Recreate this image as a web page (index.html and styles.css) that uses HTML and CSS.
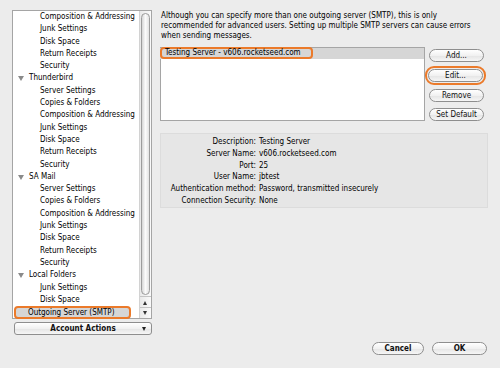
FILE: index.html
```html
<!DOCTYPE html>
<html lang="en">

<head>
    <meta charset="UTF-8">
    <title>Account Settings</title>
    <link rel="stylesheet" href="styles.css">
</head>

<body>
    <section class="window">
        <div class="sidebar">
            <div class="tree">
                <ul class="treelist">
                    <li class="child">Composition &amp; Addressing</li>
                    <li class="child">Junk Settings</li>
                    <li class="child">Disk Space</li>
                    <li class="child">Return Receipts</li>
                    <li class="child">Security</li>
                    <li class="parent">Thunderbird</li>
                    <li class="child">Server Settings</li>
                    <li class="child">Copies &amp; Folders</li>
                    <li class="child">Composition &amp; Addressing</li>
                    <li class="child">Junk Settings</li>
                    <li class="child">Disk Space</li>
                    <li class="child">Return Receipts</li>
                    <li class="child">Security</li>
                    <li class="parent">SA Mail</li>
                    <li class="child">Server Settings</li>
                    <li class="child">Copies &amp; Folders</li>
                    <li class="child">Composition &amp; Addressing</li>
                    <li class="child">Junk Settings</li>
                    <li class="child">Disk Space</li>
                    <li class="child">Return Receipts</li>
                    <li class="child">Security</li>
                    <li class="parent">Local Folders</li>
                    <li class="child">Junk Settings</li>
                    <li class="child">Disk Space</li>
                    <li class="top selected"><span class="ring">Outgoing Server (SMTP)</span></li>
                </ul>
                <div class="scrollbar">
                    <div class="thumb"></div>
                    <div class="arrow up"></div>
                    <div class="arrow down"></div>
                </div>
            </div>
            <button class="pill actions">Account Actions<span class="caret"></span></button>
        </div>

        <div class="main">
            <p class="intro">Although you can specify more than one outgoing server (SMTP), this is only recommended for advanced users. Setting up multiple SMTP servers can cause errors when sending messages.</p>

            <div class="servers">
                <div class="serverlist">
                    <div class="serverrow"><span class="ring">Testing Server - v606.rocketseed.com</span></div>
                </div>
                <div class="serverbuttons">
                    <button class="pill">Add...</button>
                    <div class="focus"><button class="pill">Edit...</button></div>
                    <button class="pill">Remove</button>
                    <button class="pill">Set Default</button>
                </div>
            </div>

            <div class="details">
                <span class="label">Description:</span><span>Testing Server</span>
                <span class="label">Server Name:</span><span>v606.rocketseed.com</span>
                <span class="label">Port:</span><span>25</span>
                <span class="label">User Name:</span><span>jbtest</span>
                <span class="label">Authentication method:</span><span>Password, transmitted insecurely</span>
                <span class="label">Connection Security:</span><span>None</span>
            </div>
        </div>
    </section>

    <div class="footer">
        <button class="pill cancel">Cancel</button>
        <button class="pill ok">OK</button>
    </div>
</body>

</html>
```

FILE: styles.css
```css
body {
    margin: 0;
    width: 500px;
    height: 368px;
    overflow: hidden;
    background-color: #ececec;
    color: #000;
    font-family: 'DejaVu Sans Condensed', 'DejaVu Sans', sans-serif;
    font-size: 8px;
}

.window {
    display: grid;
    grid-template-columns: 140px 328px;
    column-gap: 8px;
    padding: 10px 0 0 12px;
}

/* left tree */

.tree {
    display: flex;
    height: 307px;
    border: 1px solid #a5a5a5;
    background-color: white;
}

.treelist {
    flex: 1;
    list-style: none;
    margin: 0;
    padding: 0;
}

.treelist li {
    height: 12.3px;
    line-height: 12.3px;
    white-space: nowrap;
}

.child {
    padding-left: 27px;
}

.parent {
    position: relative;
    padding-left: 16px;
}

.parent::before {
    content: '';
    position: absolute;
    left: 5px;
    top: 4px;
    border-left: 3px solid transparent;
    border-right: 3px solid transparent;
    border-top: 5px solid #8a8a8a;
}

.top {
    padding-left: 1px;
}

.selected .ring {
    display: block;
    width: 101px;
    height: 9px;
    line-height: 9px;
    padding-left: 12px;
    background-color: #d6d6d6;
    border: 2px solid #eb7a2a;
    border-radius: 4px;
}

.scrollbar {
    display: flex;
    flex-direction: column;
    width: 11px;
    border-left: 1px solid #d2d2d2;
    background: linear-gradient(to right, #e9e9e9, #fafafa);
}

.thumb {
    height: 283px;
    margin: 2px 1px 0;
    border: 1px solid #9c9c9c;
    border-radius: 5px;
    background: linear-gradient(to right, #d6d6d6, #fbfbfb 50%, #e2e2e2);
}

.arrow {
    position: relative;
    height: 10px;
}

.arrow::before {
    content: '';
    position: absolute;
    left: 3px;
    border-left: 2.5px solid transparent;
    border-right: 2.5px solid transparent;
}

.up {
    margin-top: 1px;
    border-top: 1px solid #c4c4c4;
}

.up::before {
    top: 4px;
    border-bottom: 4px solid #333;
}

.down {
    border-top: 1px solid #c4c4c4;
}

.down::before {
    top: 3px;
    border-top: 4px solid #333;
}

/* buttons */

.pill {
    display: block;
    box-sizing: border-box;
    height: 13px;
    padding: 0;
    border: 1px solid #8e8e8e;
    border-radius: 7px;
    background: linear-gradient(to bottom, #ffffff, #f1f1f1 50%, #e4e4e4 51%, #f6f6f6);
    font-family: inherit;
    font-size: 8px;
    line-height: 11px;
    color: #111;
    text-align: center;
}

.actions {
    position: relative;
    width: 138px;
    margin: 3px 0 0 2px;
    border-radius: 3px;
    font-weight: bold;
}

.caret {
    position: absolute;
    right: 5px;
    top: 4px;
    border-left: 2.5px solid transparent;
    border-right: 2.5px solid transparent;
    border-top: 4px solid #222;
}

/* right side */

.intro {
    margin: 1px 0 0 1px;
    width: 318px;
    line-height: 10px;
}

.servers {
    display: flex;
    margin-top: 6px;
}

.serverlist {
    box-sizing: border-box;
    width: 265px;
    height: 74px;
    border: 1px solid #a5a5a5;
    background-color: white;
}

.serverrow {
    height: 11px;
    margin-left: -1px;
    background-color: #d6d6d6;
}

.serverrow .ring {
    display: inline-block;
    box-sizing: border-box;
    height: 12px;
    line-height: 8px;
    padding: 0 10px 0 3px;
    border: 2px solid #eb7a2a;
    border-radius: 4px;
    margin-top: -1px;
}

.serverbuttons {
    display: flex;
    flex-direction: column;
    align-items: flex-end;
    width: 61px;
    margin-top: 2px;
}

.serverbuttons .pill {
    width: 55px;
    margin-right: 2px;
}

.serverbuttons > .focus + .pill {
    margin-top: 4px;
}

.serverbuttons .pill + .pill {
    margin-top: 6px;
}

.focus {
    padding: 1px;
    border: 2px solid #eb7a2a;
    border-radius: 9px;
    margin-top: 4px;
}

.focus .pill {
    margin: 0;
}

.details {
    display: grid;
    grid-template-columns: 95px 1fr;
    column-gap: 3px;
    box-sizing: border-box;
    height: 75px;
    margin-top: 12px;
    padding-top: 2px;
    border: 1px solid #dcdcdc;
    background-color: #e6e6e6;
    line-height: 11.6px;
}

.label {
    text-align: right;
    white-space: nowrap;
}

.footer {
    display: flex;
    justify-content: flex-end;
    gap: 8px;
    padding: 7px 13px 0 0;
}

.footer .pill {
    font-weight: bold;
}

.cancel {
    width: 52px;
}

.ok {
    width: 55px;
}
```
